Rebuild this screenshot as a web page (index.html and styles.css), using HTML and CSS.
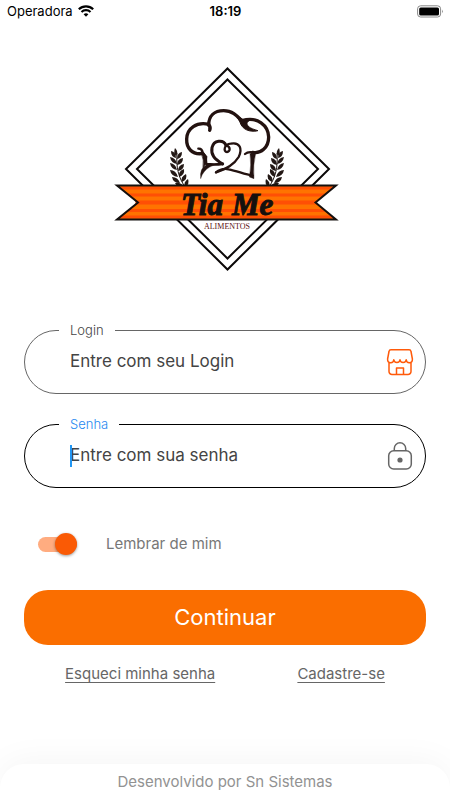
FILE: index.html
```html
<!DOCTYPE html>
<html lang="pt-BR">
<head>
<meta charset="utf-8">
<meta name="viewport" content="width=device-width, initial-scale=1">
<title>Tia Me Alimentos</title>
<link rel="stylesheet" href="styles.css">
</head>
<body>
<header class="status">
  <div class="carrier">Operadora
    <svg width="16" height="12" viewBox="0 0 16 12" fill="none" stroke="#000" stroke-width="2.2" aria-hidden="true"><path d="M.8 4.2C4.8.4 11.2.4 15.2 4.2M3.5 7c2.5-2.4 6.500-2.400 9 0"/><path d="M8 11.800 5.600 9.300q2.400-1.900 4.800 0z" fill="#000" stroke="none"/></svg>
  </div>
  <time class="clock">18:19</time>
  <div class="battery"><svg width="27" height="13" viewBox="0 0 27 13" aria-hidden="true"><rect x=".6" y=".8" width="23" height="11.200" rx="3" fill="none" stroke="#888"/><rect x="2.200" y="2.400" width="19.800" height="8" rx="1.500"/><path d="M25 4.500q1.600 1.900 0 3.800z" fill="#777"/></svg></div>
</header>

<main class="content">
  <svg class="logo" viewBox="112 66 230 206" role="img" aria-label="Tia Me Alimentos">
    <defs>
      <g id="wheat" fill="#231815">
        <path d="M177 153C176 166 178 178 186 188" fill="none" stroke="#231815" stroke-width="1"/>
        <path d="M175 148q4 4 1 8q-3-3-1-8z"/>
        <path d="M171 151q5 1 5 7q-5-1-5-7zM182 152q-5 1-5 7q5-1 5-7z"/>
        <path d="M170 157q6 1 7 7q-6-1-7-7zM183 158q-6 1-6 7q6-1 6-7z"/>
        <path d="M170 163q6 1 7 7q-6-1-7-7zM184 164q-6 1-6 7q6-1 6-7z"/>
        <path d="M170 170q6 0 8 7q-7-1-8-7zM184 169q-6 2-5 8q6-2 5-8z"/>
        <path d="M172 177q6 0 8 6q-7 0-8-6zM186 174q-6 3-4 8q6-3 4-8z"/>
        <path d="M175 183q6-1 9 4q-7 1-9-4zM188 179q-5 3-3 8q5-3 3-8z"/>
      </g>
    </defs>
    <g fill="none" stroke="#0b0808" stroke-width="2">
      <path d="M227.500 68.500 329 169 227.500 269.500 126 169z"/>
      <path d="M227.500 79.500 318 169 227.500 258.500 137 169z"/>
    </g>
    <use href="#wheat"/>
    <use href="#wheat" transform="translate(454 0) scale(-1 1)"/>
    <g transform="translate(166 100) scale(.33333)" fill="none" stroke="#231210" stroke-width="10" stroke-linecap="round" stroke-linejoin="round">
      <path d="M131 91Q135 82 128 73C92 65 63 84 62 117C61 145 79 164 107 161"/>
      <path d="M128 76C128 48 145 32 173 32C204 32 218 54 234 69"/>
      <path d="M228 62C275 48 307 77 308 111C308 143 284 162 260 157"/>
      <path d="M260 157Q246 154 237 162" stroke-width="7"/>
      <path d="M213 49C229 54 230 64 250 62C238 68 238 82 276 92C250 98 228 88 222 67z" fill="#231210" stroke-width="3"/>
      <path d="M97 146Q108 145 110 157L119 170L121 192Q145 195 170 192" stroke-width="7"/>
      <path d="M170 192C145 177 134 164 138 143C143 120 172 117 180 136" stroke-width="9"/>
      <path d="M180 136C195 139 193 156 183 156C171 156 174 132 194 131C222 125 230 147 218 171C203 196 180 207 150 217" stroke-width="7"/>
      <path d="M150 217Q168 203 188 208C214 213 235 223 260 227" stroke-width="7"/>
      <path d="M256 157L270 157Q260 195 264 236L250 231Q257 194 252 162z" fill="#231210" stroke-width="1"/>
      <path d="M172 189C144 193 114 202 104 236Q100 204 122 194z" fill="#231210" stroke-width="1"/>
      <path d="M107 151L123 170L120 192 111 202Q115 180 106 160z" fill="#231210" stroke-width="2"/>
    </g>
    <path d="M117 185.500H336L315.500 202.500 336 219.500H117L138 202.500z" fill="#ff7300"/>
    <path d="M118.200 186.500H334.800L331.200 189.500H121.900zM126.700 193.500H326.400L322.700 196.500H130.400zM135.400 200.500H317.900L315.500 202.500 317.900 204.500H135.500zM129.300 209H323.300L327 212H125.600zM121.200 215.500H331.200L334.800 218.500H118.200z" fill="#ff4f05"/>
    <path d="M117 185.500H336L315.500 202.500 336 219.500H117L138 202.500z" fill="none" stroke="#15100e" stroke-width="2"/>
    <text class="logo-name" x="181" y="215">Tia</text>
    <text class="logo-name" x="232" y="215">Me</text>
    <text class="logo-sub" x="227" y="229" text-anchor="middle">ALIMENTOS</text>
  </svg>

  <form class="form">
    <div class="field">
      <label for="login">Login</label>
      <input id="login" type="text" placeholder="Entre com seu Login">
      <svg class="field-icon" viewBox="0 0 28 28" fill="none" stroke="#ff5a0a" stroke-width="1.500" stroke-linejoin="round" stroke-linecap="round" aria-hidden="true"><path d="M5 1.800h18a2 2 0 0 1 2 1.700l1.400 7.500c.2 5-5.800 5-6.200.7c-.3 3.600-5.900 3.600-6.200 0c-.3 3.600-5.900 3.600-6.200 0c-.4 4.300-6.400 4.300-6.200-.7L3 3.500a2 2 0 0 1 2-1.700zM3 15v8.500a3 3 0 0 0 3 3h16a3 3 0 0 0 3-3V15M10.500 26v-6h7v6"/></svg>
    </div>
    <div class="field field-active">
      <label for="senha">Senha</label>
      <input id="senha" type="password" placeholder="Entre com sua senha">
      <span class="caret"></span>
      <svg class="field-icon" viewBox="0 0 28 28" fill="none" stroke="#666" stroke-width="1.500" aria-hidden="true"><rect x="2.700" y="8.700" width="22.600" height="18.300" rx="5"/><path d="M8.300 8.700V6.500a5.700 5.700 0 0 1 11.400 0v2.200"/><circle cx="14" cy="18" r="2.600" fill="#666" stroke="none"/></svg>
    </div>
    <label class="remember"><input type="checkbox" role="switch" checked><span>Lembrar de mim</span></label>
    <button class="submit" type="button">Continuar</button>
    <nav class="links"><a href="#senha">Esqueci minha senha</a><a href="#cadastro">Cadastre-se</a></nav>
  </form>
</main>
<footer class="footer">Desenvolvido por Sn Sistemas</footer>
</body>
</html>
```
FILE: styles.css
```css
* { box-sizing: border-box; }

body {
  margin: 0;
  min-height: 100vh;
  display: flex;
  flex-direction: column;
  overflow-x: hidden;
  background: #fff;
  color: #444;
  font-family: Inter, "Liberation Sans", sans-serif;
}

.status {
  display: grid;
  grid-template-columns: 1fr auto 1fr;
  align-items: center;
  height: 24px;
  padding: 0 6px 2px 7px;
  color: #000;
  font-size: 13px;
}
.carrier { display: flex; align-items: center; gap: 5px; }
.clock { font-weight: 600; }
.battery { display: flex; justify-content: flex-end; }

.content { padding: 42px 24px 24px; }

.logo {
  display: block;
  width: 230px;
  margin: 0 auto 58px;
  padding-left: 4px;
  box-sizing: content-box;
}
.logo-name {
  font: italic 900 31px "Liberation Serif", serif;
  fill: #15100e;
  stroke: #15100e;
}
.logo-sub {
  font: 8px "Liberation Serif", serif;
  fill: #5c1010;
}

.form { display: flex; flex-direction: column; }

.field {
  position: relative;
  display: flex;
  align-items: center;
  height: 64px;
  margin-bottom: 30px;
  padding: 0 11px 0 45px;
  border: 1px solid #666;
  border-radius: 32px;
}
.field-active { border-color: #000; }
.field label {
  position: absolute;
  top: -10px;
  left: 34px;
  padding: 0 11px;
  background: #fff;
  font-size: 13px;
  font-weight: 300;
  line-height: 18px;
}
.field-active label { color: #1e88f0; }
.field input {
  flex: 1;
  min-width: 0;
  padding: 0 0 2px;
  border: 0;
  outline: 0;
  background: none;
  font: 400 17px Inter, sans-serif;
}
.field input::placeholder { color: #444; opacity: 1; }
.field-icon { width: 28px; height: 28px; }
.caret {
  position: absolute;
  left: 45px;
  width: 2px;
  height: 22px;
  background: #2196f3;
}

.remember {
  display: flex;
  align-items: center;
  gap: 29px;
  margin: 14px 0 34px 14px;
  color: #777;
  font-size: 15px;
  line-height: 24px;
}
.remember input {
  appearance: none;
  display: flex;
  align-items: center;
  justify-content: flex-end;
  width: 39px;
  height: 15px;
  margin: 0;
  border-radius: 8px;
  background: #ffac80;
}
.remember input::before {
  content: "";
  width: 22px;
  height: 22px;
  border-radius: 50%;
  background: #fa5a05;
  box-shadow: 0 1px 3px #0006;
}
.remember input:not(:checked) { justify-content: flex-start; }

.submit {
  height: 55px;
  padding: 0 0 2px;
  border: 0;
  border-radius: 24px;
  background: #fa6e00;
  color: #fff;
  font: 400 22px Inter, sans-serif;
}

.links {
  display: flex;
  justify-content: space-around;
  margin-top: 20px;
  font-size: 15px;
  line-height: 18px;
}
.links a { color: #666; text-underline-offset: 3px; }

.footer {
  margin-top: auto;
  padding: 8px 16px;
  border-radius: 24px 24px 0 0;
  background: #fff;
  box-shadow: 0 0 36px #0000000d;
  color: #929292;
  font-size: 15px;
  line-height: 20px;
  text-align: center;
}
```
